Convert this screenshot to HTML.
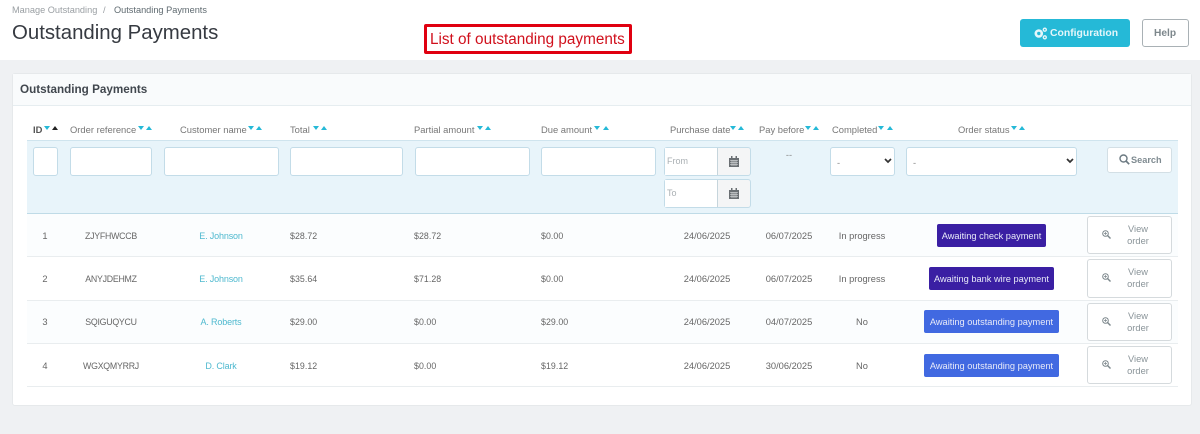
<!DOCTYPE html>
<html><head><meta charset="utf-8">
<style>
*{box-sizing:border-box}
html,body{margin:0;padding:0}
body{width:1200px;height:434px;overflow:hidden;background:#eff1f3;font-family:"Liberation Sans",sans-serif;position:relative;color:#666}
#w{position:absolute;left:0;top:0;width:1200px;height:434px;filter:blur(.3px)}
.a{position:absolute}
.t{position:absolute;white-space:nowrap;font-size:9.3px;line-height:14px;color:#666}
.c{transform:translateX(-50%)}
.h{color:#777;font-size:9.4px;top:122.500px}
.r{font-size:8.8px;letter-spacing:.05px}
.o{font-size:8.8px;letter-spacing:-.25px}
.n{font-size:9px;letter-spacing:-.15px;color:#4fb9cf}
.i{position:absolute;background:#fff;border:1px solid #c3dce8;border-radius:3px;height:29px;top:147px}
.tri{position:absolute;top:126px;width:0;height:0;border-left:3.5px solid transparent;border-right:3.5px solid transparent}
.d{border-top:4px solid #25b9d7}
.u{border-bottom:4px solid #25b9d7}
.b{position:absolute;left:1087px;width:85px;background:#fff;border:1px solid #d5dadd;border-radius:3px}
.b span{position:absolute;left:29px;width:42px;text-align:center;font-size:9.3px;line-height:12.700px;top:5.500px;color:#8a9499}
.b svg{position:absolute;left:14px;top:13px}
.s{position:absolute;color:#e8eaf8;font-size:9.250px;line-height:25px;text-align:center;border-radius:2px;white-space:nowrap}
.l{position:absolute;left:27px;width:1151px;height:1px;background:#e9edef}
</style></head><body><div id="w">
<div class="a" style="left:0;top:0;width:1200px;height:60px;background:#fff"></div>
<div class="t" style="left:12px;top:2.500px;color:#9a9fa3;font-size:9.200px">Manage Outstanding</div>
<div class="t" style="left:103px;top:2.500px;color:#9a9fa3">/</div>
<div class="t" style="left:114px;top:2.500px;color:#5f6a70;font-size:9.200px">Outstanding Payments</div>
<div class="t" style="left:12px;top:20px;font-size:20.400px;line-height:27px;color:#363a41">Outstanding Payments</div>

<div class="a" style="left:424px;top:24px;width:208px;height:30px;border:3px solid #e00010;border-radius:2px;background:#fff"></div>
<div class="t" style="left:430px;top:31px;font-size:15.300px;line-height:18px;color:#d0101c">List of outstanding payments</div>

<div class="a" style="left:1020px;top:19px;width:110px;height:28px;background:#25b9d7;border-radius:3px"></div>
<svg class="a" style="left:1034px;top:27px" width="14" height="13" viewBox="0 0 14 13"><circle cx="4.800" cy="6.500" r="3" fill="none" stroke="#e4f6fa" stroke-width="2.600"/><circle cx="10.800" cy="2.700" r="1.500" fill="none" stroke="#e4f6fa" stroke-width="1.400"/><circle cx="10.800" cy="10.300" r="1.500" fill="none" stroke="#e4f6fa" stroke-width="1.400"/></svg>
<div class="t" style="left:1050px;top:27px;color:#e4f6fa;font-size:10.400px;font-weight:bold">Configuration</div>
<div class="a" style="left:1142px;top:19px;width:47px;height:28px;background:#fff;border:1px solid #a9b1b5;border-radius:3px"></div>
<div class="t" style="left:1154px;top:27px;color:#7d878c;font-size:10.200px;font-weight:bold">Help</div>

<div class="a" style="left:12px;top:73px;width:1180px;height:333px;background:#fff;border:1px solid #e6e9eb;border-radius:3px"></div>
<div class="a" style="left:13px;top:74px;width:1178px;height:32px;background:#f9fbfc;border-bottom:1px solid #e6edf0"></div>
<div class="t" style="left:20px;top:83px;font-size:11.700px;font-weight:bold;color:#41474e">Outstanding Payments</div>

<div class="t h" style="left:33px;font-weight:bold;color:#555">ID</div><div class="tri d" style="left:44px"></div><div class="tri" style="left:52px;border-bottom:4px solid #222"></div>
<div class="t h" style="left:70px">Order reference</div><div class="tri d" style="left:138px"></div><div class="tri u" style="left:146px"></div>
<div class="t h" style="left:180px">Customer name</div><div class="tri d" style="left:248px"></div><div class="tri u" style="left:256px"></div>
<div class="t h" style="left:290px">Total</div><div class="tri d" style="left:313px"></div><div class="tri u" style="left:321px"></div>
<div class="t h" style="left:414px">Partial amount</div><div class="tri d" style="left:477px"></div><div class="tri u" style="left:485px"></div>
<div class="t h" style="left:541px">Due amount</div><div class="tri d" style="left:594px"></div><div class="tri u" style="left:603px"></div>
<div class="t h" style="left:670px">Purchase date</div><div class="tri d" style="left:730px"></div><div class="tri u" style="left:738px"></div>
<div class="t h" style="left:759px">Pay before</div><div class="tri d" style="left:805px"></div><div class="tri u" style="left:813px"></div>
<div class="t h" style="left:832px">Completed</div><div class="tri d" style="left:878px"></div><div class="tri u" style="left:887px"></div>
<div class="t h" style="left:958px">Order status</div><div class="tri d" style="left:1011px"></div><div class="tri u" style="left:1019px"></div>

<div class="a" style="left:27px;top:140px;width:1151px;height:74px;background:#e8f4fa;border-top:1px solid #cfe4ee;border-bottom:1px solid #bfdbe7"></div>
<div class="i" style="left:33px;width:25px"></div>
<div class="i" style="left:70px;width:82px"></div>
<div class="i" style="left:164px;width:115px"></div>
<div class="i" style="left:290px;width:113px"></div>
<div class="i" style="left:415px;width:115px"></div>
<div class="i" style="left:541px;width:115px"></div>
<div class="i" style="left:664px;width:87px;background:#f4f5f6"></div>
<div class="a" style="left:665px;top:148px;width:53px;height:27px;background:#fff;border-right:1px solid #c6d5dc"></div>
<div class="t" style="left:667px;top:154px;font-size:9px;color:#a9afb3">From</div>
<div class="i" style="left:664px;top:179px;width:87px;background:#f4f5f6"></div>
<div class="a" style="left:665px;top:180px;width:53px;height:27px;background:#fff;border-right:1px solid #c6d5dc"></div>
<div class="t" style="left:667px;top:186px;font-size:9px;color:#a9afb3">To</div>
<svg class="a" style="left:729px;top:156px" width="10" height="11" viewBox="0 0 10 11"><path d="M0 2h10v9H0z" fill="#6a6f73"/><path d="M2 0h1.500v3H2zM6.500 0H8v3H6.500z" fill="#6a6f73"/><path d="M1 4.500h8M1 6.500h8M1 8.500h8M3 4v6M5 4v6M7 4v6" stroke="#e6e8e9" stroke-width=".6"/></svg>
<svg class="a" style="left:729px;top:188px" width="10" height="11" viewBox="0 0 10 11"><path d="M0 2h10v9H0z" fill="#6a6f73"/><path d="M2 0h1.500v3H2zM6.500 0H8v3H6.500z" fill="#6a6f73"/><path d="M1 4.500h8M1 6.500h8M1 8.500h8M3 4v6M5 4v6M7 4v6" stroke="#e6e8e9" stroke-width=".6"/></svg>
<div class="t c" style="left:789px;top:148px;color:#888">--</div>
<div class="i" style="left:830px;width:65px"></div>
<div class="t" style="left:837px;top:156px;color:#888">-</div>
<svg class="a" style="left:884px;top:158px" width="8" height="6" viewBox="0 0 8 6"><path d="M1 1l3 3 3-3" fill="none" stroke="#333" stroke-width="1.700"/></svg>
<div class="i" style="left:906px;width:171px"></div>
<div class="t" style="left:913px;top:156px;color:#888">-</div>
<svg class="a" style="left:1066px;top:158px" width="8" height="6" viewBox="0 0 8 6"><path d="M1 1l3 3 3-3" fill="none" stroke="#333" stroke-width="1.700"/></svg>
<div class="a" style="left:1107px;top:147px;width:65px;height:26px;background:#fff;border:1px solid #d3dfe5;border-radius:3px"></div>
<svg class="a" style="left:1119px;top:154px" width="11" height="11" viewBox="0 0 11 11"><circle cx="4.500" cy="4.500" r="3.500" fill="none" stroke="#6c7a82" stroke-width="1.400"/><path d="M7 7l3.200 3.200" stroke="#6c7a82" stroke-width="1.700"/></svg>
<div class="t" style="left:1131px;top:153px;color:#7f8b91;font-weight:bold;font-size:9.200px">Search</div>

<div class="a" style="left:27px;top:214px;width:1151px;height:42px;background:#fbfdfe"></div>
<div class="a" style="left:27px;top:301px;width:1151px;height:42px;background:#fbfdfe"></div>
<div class="l" style="top:256px"></div><div class="l" style="top:300px"></div><div class="l" style="top:343px"></div><div class="l" style="top:386px"></div>

<div class="t c" style="left:45px;top:229px">1</div><div class="t c o" style="left:111px;top:229px">ZJYFHWCCB</div><div class="t c n" style="left:221px;top:229px">E. Johnson</div><div class="t r" style="left:290px;top:229px">$28.72</div><div class="t r" style="left:414px;top:229px">$28.72</div><div class="t r" style="left:541px;top:229px">$0.00</div><div class="t c" style="left:707px;top:229px">24/06/2025</div><div class="t c" style="left:789px;top:229px">06/07/2025</div><div class="t c" style="left:862px;top:229px">In progress</div>
<div class="t c" style="left:45px;top:272px">2</div><div class="t c o" style="left:111px;top:272px">ANYJDEHMZ</div><div class="t c n" style="left:221px;top:272px">E. Johnson</div><div class="t r" style="left:290px;top:272px">$35.64</div><div class="t r" style="left:414px;top:272px">$71.28</div><div class="t r" style="left:541px;top:272px">$0.00</div><div class="t c" style="left:707px;top:272px">24/06/2025</div><div class="t c" style="left:789px;top:272px">06/07/2025</div><div class="t c" style="left:862px;top:272px">In progress</div>
<div class="t c" style="left:45px;top:315px">3</div><div class="t c o" style="left:111px;top:315px">SQIGUQYCU</div><div class="t c n" style="left:221px;top:315px">A. Roberts</div><div class="t r" style="left:290px;top:315px">$29.00</div><div class="t r" style="left:414px;top:315px">$0.00</div><div class="t r" style="left:541px;top:315px">$29.00</div><div class="t c" style="left:707px;top:315px">24/06/2025</div><div class="t c" style="left:789px;top:315px">04/07/2025</div><div class="t c" style="left:862px;top:315px">No</div>
<div class="t c" style="left:45px;top:359px">4</div><div class="t c o" style="left:111px;top:359px">WGXQMYRRJ</div><div class="t c n" style="left:221px;top:359px">D. Clark</div><div class="t r" style="left:290px;top:359px">$19.12</div><div class="t r" style="left:414px;top:359px">$0.00</div><div class="t r" style="left:541px;top:359px">$19.12</div><div class="t c" style="left:707px;top:359px">24/06/2025</div><div class="t c" style="left:789px;top:359px">30/06/2025</div><div class="t c" style="left:862px;top:359px">No</div>

<div class="s" style="left:937px;top:224px;width:109px;height:23px;background:#3a1fa3">Awaiting check payment</div>
<div class="s" style="left:929px;top:267px;width:125px;height:23px;background:#3a1fa3">Awaiting bank wire payment</div>
<div class="s" style="left:924px;top:310px;width:135px;height:23px;background:#4169e1">Awaiting outstanding payment</div>
<div class="s" style="left:924px;top:354px;width:135px;height:23px;background:#4169e1">Awaiting outstanding payment</div>

<div class="b" style="top:216px;height:38px"><svg width="9" height="9" viewBox="0 0 9 9"><circle cx="3.500" cy="3.500" r="2.800" fill="none" stroke="#7c878c" stroke-width="1"/><path d="M5.500 5.500L8.500 8.500" stroke="#7c878c" stroke-width="1.400"/><path d="M2 3.500h3M3.500 2v3" stroke="#7c878c" stroke-width=".7"/></svg><span>View<br>order</span></div>
<div class="b" style="top:259px;height:39px"><svg width="9" height="9" viewBox="0 0 9 9"><circle cx="3.500" cy="3.500" r="2.800" fill="none" stroke="#7c878c" stroke-width="1"/><path d="M5.500 5.500L8.500 8.500" stroke="#7c878c" stroke-width="1.400"/><path d="M2 3.500h3M3.500 2v3" stroke="#7c878c" stroke-width=".7"/></svg><span>View<br>order</span></div>
<div class="b" style="top:303px;height:38px"><svg width="9" height="9" viewBox="0 0 9 9"><circle cx="3.500" cy="3.500" r="2.800" fill="none" stroke="#7c878c" stroke-width="1"/><path d="M5.500 5.500L8.500 8.500" stroke="#7c878c" stroke-width="1.400"/><path d="M2 3.500h3M3.500 2v3" stroke="#7c878c" stroke-width=".7"/></svg><span>View<br>order</span></div>
<div class="b" style="top:346px;height:38px"><svg width="9" height="9" viewBox="0 0 9 9"><circle cx="3.500" cy="3.500" r="2.800" fill="none" stroke="#7c878c" stroke-width="1"/><path d="M5.500 5.500L8.500 8.500" stroke="#7c878c" stroke-width="1.400"/><path d="M2 3.500h3M3.500 2v3" stroke="#7c878c" stroke-width=".7"/></svg><span>View<br>order</span></div>
</div></body></html>
